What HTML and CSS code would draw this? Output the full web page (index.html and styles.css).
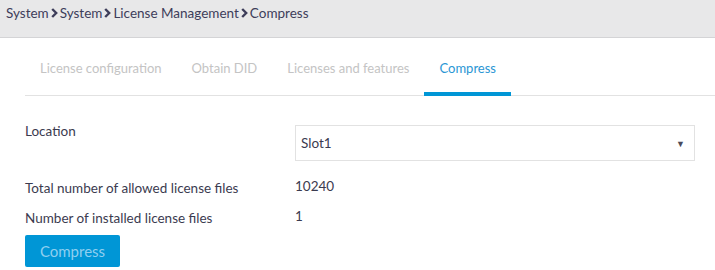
FILE: index.html
```html
<!DOCTYPE html>
<html lang="en">

<head>
    <meta name="viewport" content="width=device-width, initial-scale=1" />
    <title>Compress</title>
    <link rel="stylesheet" href="styles.css">
</head>

<body>
    <div class="breadcrumb">
        <span>System</span>
        <svg class="sep" viewBox="0 0 7 10"><polyline points="1.2,1 5.2,5 1.2,9" /></svg>
        <span>System</span>
        <svg class="sep" viewBox="0 0 7 10"><polyline points="1.2,1 5.2,5 1.2,9" /></svg>
        <span>License Management</span>
        <svg class="sep" viewBox="0 0 7 10"><polyline points="1.2,1 5.2,5 1.2,9" /></svg>
        <span>Compress</span>
    </div>

    <div class="content">
        <div class="tabs">
            <div class="tab">License configuration</div>
            <div class="tab">Obtain DID</div>
            <div class="tab">Licenses and features</div>
            <div class="tab active">Compress</div>
        </div>

        <form class="form">
            <div class="field">
                <label class="label">Location</label>
                <div class="select">
                    <span>Slot1</span>
                    <span class="arrow">&#9660;</span>
                </div>
            </div>
            <div class="field info">
                <div class="label">Total number of allowed license files</div>
                <div class="value">10240</div>
            </div>
            <div class="field info">
                <div class="label">Number of installed license files</div>
                <div class="value">1</div>
            </div>
            <button type="button" class="btn">Compress</button>
        </form>
    </div>
</body>

</html>
```

FILE: styles.css
```css
body {
    margin: 0;
    font-family: Lato, "Liberation Sans", sans-serif;
    font-size: 13.5px;
    color: #3b3b4f;
    background: #fff;
}

.breadcrumb {
    height: 38px;
    box-sizing: border-box;
    padding: 4px 6px 0;
    background-color: #e8e8e9;
    border-bottom: 1px solid #d4d4d6;
    display: flex;
    align-items: flex-start;
    line-height: 18px;
    font-size: 13.5px;
    color: #3d3d5a;
}

.breadcrumb .sep {
    width: 7px;
    height: 10px;
    margin: 4px 2px 0 2px;
}

.sep polyline {
    fill: none;
    stroke: #3d3d5a;
    stroke-width: 2.4;
}

.content {
    padding-left: 25px;
}

.tabs {
    display: flex;
    border-bottom: 1px solid #e2e2e2;
}

.tab {
    padding: 20px 15px 14px;
    line-height: 20px;
    font-size: 13px;
    color: #c4c4c4;
    border-bottom: 4px solid transparent;
    margin-bottom: -1px;
}

.tab.active {
    color: #2a96d4;
    border-bottom-color: #0096d6;
}

.form {
    padding-top: 27px;
}

.field {
    display: flex;
    align-items: flex-start;
}

.label {
    width: 270px;
    flex: none;
    line-height: 16px;
}

.select {
    width: 400px;
    height: 36px;
    box-sizing: border-box;
    border: 1px solid #e2e2e2;
    display: flex;
    align-items: center;
    justify-content: space-between;
    padding: 0 9px 0 5px;
    margin-top: 2px;
}

.arrow {
    font-size: 9px;
    color: #4a4a5a;
}

.info {
    margin-top: 19px;
}

.info + .info {
    margin-top: 14px;
}

.value {
    margin-top: -2px;
}

.btn {
    margin-top: 9px;
    width: 95px;
    height: 32px;
    border: 0;
    border-radius: 2px;
    background-color: #0096d6;
    color: #8fcff0;
    font-family: inherit;
    font-size: 15px;
}
```
